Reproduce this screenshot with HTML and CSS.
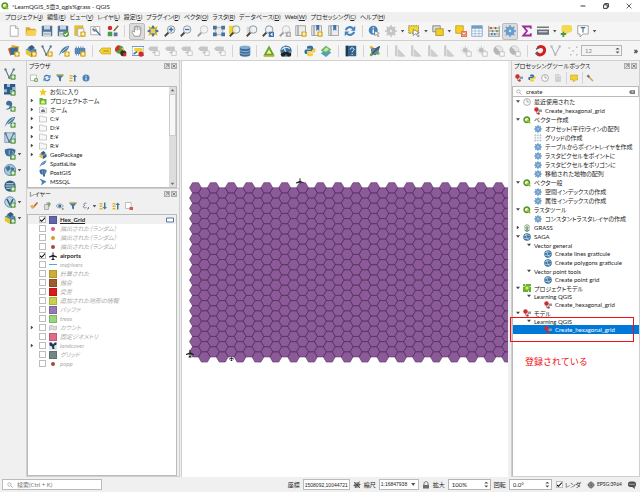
FILE: index.html
```html
<!DOCTYPE html>
<html lang="ja">
<head>
    <meta charset="UTF-8">
    <meta name="viewport" content="width=device-width, initial-scale=1.0">
    <title>*LearnQGIS_5章3_qgis%grass - QGIS</title>
    <link rel="stylesheet" href="styles.css">
</head>
<body>
    <!-- Icon set -->
    <svg class="sprite" aria-hidden="true">
        <symbol id="plus" viewBox="0 0 16 16"><rect x="8.5" y="8.5" width="7" height="7" rx="1" fill="#5d9a4c"/><path d="M12 9.8v4.4M9.8 12h4.4" stroke="#fff" stroke-width="1.6"/></symbol>
        <symbol id="plusy" viewBox="0 0 16 16"><rect x="8.5" y="8.5" width="7" height="7" rx="1" fill="#d9ab16"/><path d="M12 9.8v4.4M9.8 12h4.4" stroke="#fff" stroke-width="1.6"/></symbol>
        <symbol id="qgis" viewBox="0 0 16 16"><circle cx="7.5" cy="7.5" r="5.3" fill="none" stroke="#5a9a28" stroke-width="3.4"/><path d="M8 8l6.5 6.5" stroke="#8cc63f" stroke-width="3.2"/><path d="M7 7h3.5l-3.5 3.5z" fill="#e9d52f"/></symbol>
        <symbol id="new" viewBox="0 0 16 16"><path d="M3 1h7l3.5 3.5V15H3z" fill="#fff" stroke="#9a9a9a"/><path d="M10 1v3.5h3.5" fill="none" stroke="#9a9a9a"/></symbol>
        <symbol id="open" viewBox="0 0 16 16"><path d="M1 3h5l1.500 2H14v9H1z" fill="#d9a92a"/><path d="M3 7h13l-2 7H1z" fill="#f7d258"/></symbol>
        <symbol id="save" viewBox="0 0 16 16"><rect x="1" y="1" width="14" height="14" rx="1" fill="#4f7396"/><path d="M4 1h8v5H4z" fill="#c9d5e0"/><path d="M3 9h10v6H3z" fill="#e8edf1"/><path d="M4 11h8M4 13h8" stroke="#8b9aa8"/></symbol>
        <symbol id="saveas" viewBox="0 0 16 16"><use href="#save"/><circle cx="12" cy="12" r="4" fill="#5d9a4c"/><path d="M10 12l1.500 1.500 2.500-3" fill="none" stroke="#fff" stroke-width="1.400"/></symbol>
        <symbol id="layout" viewBox="0 0 16 16"><path d="M1 1h11v3H4v10H1z" fill="#f0c62c" stroke="#b8911a" stroke-width=".6"/><path d="M5 5h8v10H5z" fill="#fff" stroke="#999"/><use href="#plusy"/></symbol>
        <symbol id="layouts" viewBox="0 0 16 16"><path d="M1 2h12v11H1z" fill="#fff" stroke="#999"/><path d="M4 5l3 3M7 6l7 8" stroke="#56789a" stroke-width="2"/><circle cx="6" cy="6" r="2.500" fill="none" stroke="#888"/></symbol>
        <symbol id="style" viewBox="0 0 16 16"><circle cx="4" cy="4" r="3" fill="#c53030"/><path d="M1 9h6v6H1z" fill="#4d9a4d"/><path d="M15 1L9 8" stroke="#8a6a3c" stroke-width="2"/><path d="M9 10h5v5H9z" fill="#56789a"/></symbol>
        <symbol id="hand" viewBox="0 0 16 16"><path d="M4.500 15C3 12 1 10 1.500 8.500S4 9 4.500 9.500V3c0-1.500 2-1.500 2 0 0-2.500 2.200-2.500 2.200 0 .3-2 2.200-1.500 2.200.3 0-1.300 2.100-1.300 2.100.5V10l-1.500 5z" fill="#fff" stroke="#777"/><path d="M6.500 3v4M8.700 3v4M10.900 4v3" stroke="#777" stroke-width=".8"/></symbol>
        <symbol id="panto" viewBox="0 0 16 16"><path d="M8 0l3.500 5h-7zM8 16l3.500-5h-7zM0 8l5-3.500v7zM16 8l-5-3.500v7z" fill="#44709b"/><path d="M2 2l5 1-4 4zM14 2l-5 1 4 4zM2 14l5-1-4-4zM14 14l-5-1 4-4z" fill="#e8b91e"/><circle cx="8" cy="8" r="3" fill="#f2cd3a"/></symbol>
        <symbol id="lens" viewBox="0 0 16 16"><path d="M6 10l-5 5" stroke="#4a4438" stroke-width="2.400"/><circle cx="9.500" cy="6" r="5" fill="#eef2f5" fill-opacity=".8" stroke="#8d979f" stroke-width="1.300"/></symbol>
        <symbol id="zoomin" viewBox="0 0 16 16"><use href="#lens"/><path d="M9.500 3v6M6.500 6h6" stroke="#3c73ad" stroke-width="1.800"/></symbol>
        <symbol id="zoomout" viewBox="0 0 16 16"><use href="#lens"/><path d="M6.500 6h6" stroke="#3c73ad" stroke-width="1.800"/></symbol>
        <symbol id="zoomfull" viewBox="0 0 16 16"><path d="M3 3h10v10H3z" fill="#e6eaee" stroke="#999"/><path d="M0 1h5v5H0zM11 1h5v5h-5zM0 10h5v5H0zM11 10h5v5h-5z" fill="#46749f"/></symbol>
        <symbol id="zoomsel" viewBox="0 0 16 16"><path d="M0 1h9v11H0z" fill="#f4d522"/><use href="#lens"/></symbol>
        <symbol id="zoomlayer" viewBox="0 0 16 16"><path d="M1 2h8v9H1z" fill="#d8d8d8"/><use href="#lens"/></symbol>
        <symbol id="zoomlast" viewBox="0 0 16 16"><use href="#lens"/><path d="M9 9h7v7H9z" fill="#3c73ad"/><path d="M14 10l-3 2.500 3 2.500" fill="#fff"/></symbol>
        <symbol id="map" viewBox="0 0 16 16"><path d="M1 1h13v13H1z" fill="#ececec" stroke="#8b9196"/><path d="M4 1v13" stroke="#8b9196" stroke-width="1.500"/></symbol>
        <symbol id="mapnew" viewBox="0 0 16 16"><use href="#map"/><use href="#plusy"/></symbol>
        <symbol id="marknew" viewBox="0 0 16 16"><use href="#map"/><path d="M7 0h4v8L9 6 7 8z" fill="#3c73ad"/><use href="#plusy"/></symbol>
        <symbol id="mark" viewBox="0 0 16 16"><use href="#map"/><path d="M7 0h4v8L9 6 7 8z" fill="#3c73ad"/></symbol>
        <symbol id="refresh" viewBox="0 0 16 16"><path d="M2.500 7A5.500 5 0 0 1 12 4.500M13.500 9A5.500 5 0 0 1 4 11.500" fill="none" stroke="#4181bd" stroke-width="2.800"/><path d="M15 1v6.500H9zM1 15V8.500h6z" fill="#4181bd"/></symbol>
        <symbol id="identify" viewBox="0 0 16 16"><circle cx="7" cy="7" r="6" fill="#4a83b8"/><path d="M7 3v1.500M7 6v5" stroke="#fff" stroke-width="1.800"/><path d="M9 8l6 3-2.500 1 2 3-1.500.5-1.500-3L9 14z" fill="#fff" stroke="#555" stroke-width=".7"/></symbol>
        <symbol id="gear" viewBox="0 0 16 16"><circle cx="8" cy="8" r="4.300" fill="none" stroke="#6a9ccc" stroke-width="3.400"/><path d="M8 0v16M0 8h16M2.300 2.300l11.400 11.400M13.700 2.300L2.300 13.700" stroke="#6a9ccc" stroke-width="2"/><circle cx="8" cy="8" r="1.600" fill="#d5e5f3"/></symbol>
        <symbol id="select" viewBox="0 0 16 16"><path d="M1 1h13v10H1z" fill="#f6d92a" stroke="#666" stroke-dasharray="2 1"/><path d="M7 6l8 4-3 1 3 4-2 .5-2.500-4L7 14z" fill="#fff" stroke="#555" stroke-width=".8"/></symbol>
        <symbol id="copy" viewBox="0 0 16 16"><path d="M1 1h10v8H1z" fill="#d8d8d8" stroke="#777"/><path d="M5 5h10v9H5z" fill="#f1ce25" stroke="#a98b1b"/></symbol>
        <symbol id="deselect" viewBox="0 0 16 16"><path d="M1 1h10v10H1z" fill="#f6cf22" stroke="#b8961c"/><path d="M8 8h8v8H8z" fill="#e4774f"/><path d="M10 10l4 4M14 10l-4 4" stroke="#fff" stroke-width="1.400"/></symbol>
        <symbol id="table" viewBox="0 0 16 16"><path d="M1 1h14v14H1z" fill="#fff" stroke="#6f94b8"/><path d="M1 1h14v4H1z" fill="#6f9bc8"/><path d="M1 8h14M1 11.500h14M5.500 3v12M10.500 3v12" stroke="#93b3d0"/></symbol>
        <symbol id="abacus" viewBox="0 0 16 16"><path d="M1 1v14M15 1v14M1 4h14M1 8h14M1 12h14M0 15h16" stroke="#7c7c7c"/><path d="M3 2.500h2v3H3zM9 2.500h2v3H9z" fill="#c84335"/><path d="M5 6.500h2v3H5zM11 6.500h2v3h-2z" fill="#5c9a4c"/><path d="M4 10.500h2v3H4zM8 10.500h2v3H8z" fill="#4a83b8"/></symbol>
        <symbol id="sigma" viewBox="0 0 16 16"><path d="M13 5V2H3l5 6-5 6h10v-3" fill="none" stroke="#962a96" stroke-width="2.400"/></symbol>
        <symbol id="measure" viewBox="0 0 16 16"><path d="M0 2h16v2H0z" fill="#777"/><path d="M0 6h16v7H0z" fill="#64727f"/><path d="M2 9h12" stroke="#dce2e7" stroke-width="1.500"/></symbol>
        <symbol id="tip" viewBox="0 0 16 16"><rect x="2" y="0" width="14" height="10" rx="3" fill="#f1da50"/><path d="M7 9h5l-5 5z" fill="#f1da50"/><path d="M1 12h7M4.500 9v7" stroke="#529447" stroke-width="2.400"/></symbol>
        <symbol id="text" viewBox="0 0 16 16"><path d="M1 1h14v11H8l-4 4v-4H1z" fill="#fff" stroke="#888"/><path d="M5 3.500h6M8 3.500V10" stroke="#456a91" stroke-width="1.500"/></symbol>
        <symbol id="sources" viewBox="0 0 16 16"><path d="M0 5l9-4 3 9-9 4z" fill="#c5502c"/><path d="M5 0l10 2-2 10-9-2z" fill="#e0aa25"/><path d="M3 4l10-1v10H4z" fill="#376b9e"/><use href="#plusy"/></symbol>
        <symbol id="box" viewBox="0 0 16 16"><path d="M1 6l7-4 7 4-7 4z" fill="#5788b2"/><path d="M1 6l7 4v6l-7-4z" fill="#eac42d"/><path d="M15 6l-7 4v6l7-4z" fill="#35648d"/><path d="M4 3l5-3 4 3-5 4z" fill="#395c7a"/></symbol>
        <symbol id="geopkg" viewBox="0 0 16 16"><use href="#box"/><use href="#plusy"/></symbol>
        <symbol id="geopkgadd" viewBox="0 0 16 16"><use href="#box"/><use href="#plus"/></symbol>
        <symbol id="vee" viewBox="0 0 16 16"><path d="M2 2l5 11L13 2" fill="none" stroke="#56748d" stroke-width="1.400"/><circle cx="2" cy="2" r="1.600" fill="#667f93"/><circle cx="13" cy="2" r="1.600" fill="#667f93"/><circle cx="7" cy="13" r="1.600" fill="#667f93"/></symbol>
        <symbol id="shape" viewBox="0 0 16 16"><use href="#vee"/><use href="#plusy"/></symbol>
        <symbol id="vector" viewBox="0 0 16 16"><use href="#vee"/><use href="#plus"/></symbol>
        <symbol id="feather" viewBox="0 0 16 16"><path d="M1 15C3 7 7 2 15 1c-1 6-6 9-11 10z" fill="#4a7ca9"/><path d="M1 15C4 10 8 6 13 3" fill="none" stroke="#dce8f2"/></symbol>
        <symbol id="spatial" viewBox="0 0 16 16"><use href="#feather"/><use href="#plusy"/></symbol>
        <symbol id="spatialadd" viewBox="0 0 16 16"><use href="#feather"/><use href="#plus"/></symbol>
        <symbol id="memory" viewBox="0 0 16 16"><rect x="1" y="4" width="14" height="8" rx="1" fill="#4d7fae"/><path d="M3 2v12M6 2v12M9 2v12M12 2v12" stroke="#6392bb" stroke-width="1.400"/><use href="#plusy"/></symbol>
        <symbol id="label" viewBox="0 0 16 16"><path d="M0 8l4-4h12v8H4z" fill="#f4d02e" stroke="#b99718" stroke-width=".8"/><path d="M6 8h7" stroke="#b09434" stroke-width="1.500"/></symbol>
        <symbol id="diagram" viewBox="0 0 16 16"><circle cx="6" cy="6" r="5.500" fill="#52a047"/><path d="M6 6V.5A5.500 5.500 0 0 0 1 9z" fill="#d52f25"/><circle cx="11" cy="11" r="4" fill="#303030"/><path d="M11 11l4-1v5h-4z" fill="#d52f25"/><path d="M8 4h4v4z" fill="#edc528"/></symbol>
        <symbol id="labels" viewBox="0 0 16 16"><path d="M0 2h16v12H0z" fill="#fff" stroke="#4a7eae"/><path d="M3 4h11v5H5L3 7z" fill="#eed031"/><path d="M2 12l5-3" stroke="#56789a" stroke-width="2"/><circle cx="12" cy="12" r="3.500" fill="#d02a2a"/></symbol>
        <symbol id="labeloff" viewBox="0 0 16 16"><path d="M0 5l3-3h10v6H3z" fill="#999"/><path d="M9 8h6v6H9z" fill="#fff" stroke="#888"/><path d="M6 10h4" stroke="#888" stroke-width="2"/></symbol>
        <symbol id="db" viewBox="0 0 16 16"><path d="M1 3v10c0 3.500 14 3.500 14 0V3z" fill="#3b6c9b"/><ellipse cx="8" cy="3" rx="7" ry="2.500" fill="#85abd0"/><path d="M1 6.500c0 3 14 3 14 0M1 10c0 3 14 3 14 0" fill="none" stroke="#adc8df"/></symbol>
        <symbol id="grass" viewBox="0 0 16 16"><path d="M8 3l5.500 10h-11z" fill="#f7ef9a" stroke="#60a62e" stroke-width="2.400"/><path d="M1 15h14" stroke="#d4ab20" stroke-width="1.500"/></symbol>
        <symbol id="globe" viewBox="0 0 16 16"><circle cx="8" cy="8" r="7.500" fill="#34709f"/><path d="M2 6q6-5 11-1M2 10q6 4 12-1M5 2q2 8 6 12" fill="none" stroke="#d5e5f1" stroke-width="1.500"/></symbol>
        <symbol id="osm" viewBox="0 0 16 16"><use href="#globe"/><circle cx="4" cy="12.500" r="3" fill="#222"/><circle cx="12" cy="12.500" r="3" fill="#222"/><path d="M5 9h6v4H5z" fill="#222"/></symbol>
        <symbol id="python" viewBox="0 0 16 16"><path d="M8 1c-4 0-4 1-4 3v1h5v1H2C0 7 0 11 2 12h2V9l1-1h5l2-2V3c0-2-2-2-4-2z" fill="#35709f"/><path d="M8 15c4 0 4-1 4-3v-1H7v-1h7c2-1 2-5 0-6h-2v3l-1 1H6l-2 2v3c0 2 2 2 4 2z" fill="#f4cd3b"/></symbol>
        <symbol id="stack" viewBox="0 0 16 16"><path d="M1 11l8-5 6 4-7 6z" fill="#4b9fc6"/><path d="M1 7l7-6 7 5-7 6z" fill="#64b35d"/><path d="M4 7l5-4 3 3-4 3z" fill="#c9e3ab"/></symbol>
        <symbol id="help" viewBox="0 0 16 16"><path d="M1 1h14v14H1z" fill="#33608d"/><path d="M1 1h3v14H1z" fill="#20364b"/><path d="M7 6c0-3 5-3 5 0 0 2-2.500 1.500-2.500 4M9.500 12v1.500" fill="none" stroke="#fff" stroke-width="1.200"/></symbol>
        <symbol id="topo" viewBox="0 0 16 16"><path d="M3 3l5 2 6-3-2 7-3 4-5-1z" fill="#5f8ead" stroke="#36546b"/><path d="M2 14l12-12" stroke="#3d4c55" stroke-width="1.500"/><circle cx="3" cy="3" r="2" fill="#e5b82d"/><circle cx="12" cy="11" r="2" fill="#6ba843"/><circle cx="3" cy="13" r="2" fill="#6ba843"/></symbol>
        <symbol id="bars" viewBox="0 0 16 16"><path d="M2 15V1h2v14M6 15V6l8 8v1z" fill="#aaa" stroke="#999"/></symbol>
        <symbol id="sun" viewBox="0 0 16 16"><circle cx="7" cy="7" r="3" fill="#888"/><path d="M7 1v12M1 7h12M3 3l8 8M11 3l-8 8" stroke="#888"/><path d="M9 9h6v6H9z" fill="#fff" stroke="#777"/></symbol>
        <symbol id="contrast" viewBox="0 0 16 16"><circle cx="7" cy="7" r="6" fill="#ddd" stroke="#888"/><path d="M3 2l8 9A6 6 0 0 1 3 2z" fill="#777"/><path d="M9 9h6v6H9z" fill="#fff" stroke="#777"/></symbol>
        <symbol id="magnet" viewBox="0 0 16 16"><path d="M5 4c4-4 10-1 9 4s-7 7-10 3" fill="none" stroke="#d31f1f" stroke-width="4"/><path d="M3 6l3-3M2 12l3-3" stroke="#555" stroke-width="2"/></symbol>
        <symbol id="dots" viewBox="0 0 16 16"><path d="M2 3h2v2H2zM7 7h2v2H7zM12 2h2v2h-2zM4 12h2v2H4zM12 12h2v2h-2z" fill="#888"/></symbol>
        <symbol id="raster" viewBox="0 0 16 16"><path d="M0 0h15v14H0z" fill="#2f5a85"/><path d="M4 0h4v4H4zM11 4h4v4h-4zM0 7h4v4H0zM8 8h4v4H8z" fill="#9abbd9"/><use href="#plus"/></symbol>
        <symbol id="comma" viewBox="0 0 16 16"><path d="M3 12c4-1 5-3 4-5-3 1-5-1-4-4 1-3 8-3 8 2 0 4-3 8-8 8z" fill="#3d6f9d"/><use href="#plus"/></symbol>
        <symbol id="virtual" viewBox="0 0 16 16"><path d="M1 1h14v13H1z" fill="#bdd3e5" stroke="#6b93b5"/><use href="#vector"/></symbol>
        <symbol id="elephant" viewBox="0 0 16 16"><path d="M1 2c3-2 11-2 14 0 1 3-1 7-3 8v5H8V11C3 12 1 8 1 2z" fill="#3c6f9f"/><path d="M7 3v6M11 4q3 2 0 5" fill="none" stroke="#b9d0e3"/></symbol>
        <symbol id="pgadd" viewBox="0 0 16 16"><use href="#elephant"/><use href="#plus"/></symbol>
        <symbol id="wms" viewBox="0 0 16 16"><circle cx="8" cy="8" r="7.500" fill="#a9c6de" stroke="#4e7ba3"/><path d="M2 5l5-3 2 4-4 4zM10 4l4 2-2 4-3-2z" fill="#3f719c"/><use href="#plus"/></symbol>
        <symbol id="wcs" viewBox="0 0 16 16"><circle cx="8" cy="8" r="7.500" fill="#2f5c86"/><path d="M3 5h10M2 8h12M3 11h10" stroke="#d2e1ed" stroke-width="1.400"/><use href="#plus"/></symbol>
        <symbol id="wfs" viewBox="0 0 16 16"><circle cx="8" cy="8" r="7" fill="#bcd3e5" stroke="#4e7ba3"/><path d="M4 4l4 8 4-8" fill="none" stroke="#31597e" stroke-width="2"/><use href="#plus"/></symbol>
        <symbol id="addlayer" viewBox="0 0 16 16"><path d="M1 2h12v11H1z" fill="#fff" stroke="#888"/><use href="#plus"/></symbol>
        <symbol id="funnel" viewBox="0 0 16 16"><path d="M1 1h14v2L10 8v7l-4-2V8L1 3z" fill="#47799f"/><path d="M1 1h14v2H1z" fill="#e0bd3a"/></symbol>
        <symbol id="collapse" viewBox="0 0 16 16"><path d="M1 2h6v3H1zM1 7h6v3H1zM1 12h6v3H1z" fill="#e3b731"/><path d="M10 15V6H7l4.500-5L16 6h-3v9z" fill="#47799f"/></symbol>
        <symbol id="expand" viewBox="0 0 16 16"><path d="M1 2h6v3H1zM1 7h6v3H1zM1 12h6v3H1z" fill="#e3b731"/><path d="M10 1v9H7l4.500 5L16 10h-3V1z" fill="#47799f"/></symbol>
        <symbol id="info" viewBox="0 0 16 16"><circle cx="8" cy="8" r="7" fill="#4a83b8"/><path d="M8 3.500v2M8 7v5.500" stroke="#fff" stroke-width="2"/></symbol>
        <symbol id="star" viewBox="0 0 16 16"><path d="M8 0l2.300 5.500 5.700.5-4.300 3.800L13 16l-5-3.300L3 16l1.300-6.200L0 6l5.700-.5z" fill="#f3cb28"/></symbol>
        <symbol id="phome" viewBox="0 0 16 16"><path d="M1 2h6l1 2h7v11H1z" fill="#5fb336"/><path d="M4 9l4-3 4 3v4H4z" fill="#f6e57a"/></symbol>
        <symbol id="folder" viewBox="0 0 16 16"><path d="M1 2h6l1 2h7v10H1z" fill="#f8f8f8" stroke="#9a9a9a"/></symbol>
        <symbol id="home" viewBox="0 0 16 16"><use href="#folder"/><path d="M4 9l4-3 4 3v3H4z" fill="#777"/></symbol>
        <symbol id="mssql" viewBox="0 0 16 16"><path d="M1 1l14 6-11 8 2-7z" fill="#4a7fae"/></symbol>
        <symbol id="brush" viewBox="0 0 16 16"><path d="M15 1L8 9" stroke="#c5503b" stroke-width="3"/><path d="M0 7l6-1 4 5-6 3z" fill="#e6b235"/></symbol>
        <symbol id="group" viewBox="0 0 16 16"><path d="M3 5h8v10H3zM6 2h7v8" fill="#ddd" stroke="#777"/><path d="M12 0v8M8 4h8" stroke="#6ba05e" stroke-width="2"/></symbol>
        <symbol id="eye" viewBox="0 0 16 16"><path d="M0 8q7-9 15 0-8 8-15 0z" fill="#d8e1e8" stroke="#65747f"/><circle cx="7.500" cy="8" r="3" fill="#3c6f9f"/><path d="M11 13h5l-2.500 3z" fill="#444"/></symbol>
        <symbol id="epsilon" viewBox="0 0 16 16"><path d="M9 3C5 0 1 5 6 7 0 8 3 14 9 11" fill="none" stroke="#8b6a9e" stroke-width="1.800"/><path d="M10 14h2M13 10v4" stroke="#666" stroke-width="1.500"/></symbol>
        <symbol id="remove" viewBox="0 0 16 16"><path d="M1 1h11v12H1z" fill="#fff" stroke="#888"/><path d="M9 10h7v6H9z" fill="#d9564b"/></symbol>
        <symbol id="model" viewBox="0 0 16 16"><circle cx="5" cy="5" r="4.500" fill="#d52a2a"/><path d="M9 5h7v5H9z" fill="#8a9db0"/><circle cx="9" cy="13" r="2.500" fill="#b93a3a"/><path d="M5 8v5h3" fill="none" stroke="#8a4444"/></symbol>
        <symbol id="clock" viewBox="0 0 16 16"><circle cx="8" cy="8" r="6.800" fill="#fafafa" stroke="#888" stroke-width="1.300"/><path d="M8 3v5h4" fill="none" stroke="#888" stroke-width="1.300"/></symbol>
        <symbol id="results" viewBox="0 0 16 16"><path d="M3 1h7l3 3v11H3z" fill="#ccc" stroke="#888"/><path d="M5 7h6M5 10h6M5 13h6" stroke="#777"/></symbol>
        <symbol id="inplace" viewBox="0 0 16 16"><path d="M1 2h14v10h-4l-4 4v-4H1z" fill="#f3d034" stroke="#bc9920"/></symbol>
        <symbol id="wrench" viewBox="0 0 16 16"><path d="M4 4l10 10" stroke="#c9a84c" stroke-width="3"/><path d="M1 4l4-3 3 4-3 3z" fill="#777"/></symbol>
        <symbol id="search" viewBox="0 0 16 16"><circle cx="6.500" cy="6.500" r="4.500" fill="none" stroke="#888" stroke-width="1.500"/><path d="M10 10l5 5" stroke="#888" stroke-width="1.800"/></symbol>
        <symbol id="clear" viewBox="0 0 16 16"><path d="M0 8l4-5h12v10H4z" fill="#777"/><path d="M7 5.500l5 5M12 5.500l-5 5" stroke="#fff" stroke-width="1.500"/></symbol>
        <symbol id="grid" viewBox="0 0 16 16"><path d="M3 0v16M8 0v16M13 0v16M0 3h16M0 8h16M0 13h16" stroke="#8a9cac" stroke-dasharray="2 1"/></symbol>
        <symbol id="tree" viewBox="0 0 16 16"><circle cx="8" cy="6" r="5" fill="#c9d8c3" stroke="#839b7a"/><path d="M8 5v9M3 12l5 3 5-3" fill="none" stroke="#54823f" stroke-width="2"/></symbol>
        <symbol id="pmodel" viewBox="0 0 16 16"><path d="M0 0h16v16H0z" fill="#5fb336"/><path d="M0 5h3M13 5h3M5 0v3M11 13v3" stroke="#dff0d2" stroke-width="2"/><path d="M5 5h6v6H5z" fill="#f4e03c"/></symbol>
        <symbol id="plane" viewBox="0 0 16 16"><path d="M7 1q1-1.500 2 0v5l7 3v2L9 9.500V13l2 1.500V16H5v-1.500L7 13V9.500L0 11V9l7-3z" fill="#1c1c1c"/></symbol>
        <symbol id="lock" viewBox="0 0 16 16"><path d="M2 8h12v7H2z" fill="#6d6d6d"/><path d="M4 8V5c0-5 8-5 8 0v3" fill="none" stroke="#6d6d6d" stroke-width="2"/></symbol>
        <symbol id="extent" viewBox="0 0 16 16"><circle cx="8" cy="8" r="6" fill="#999"/><path d="M2 2l12 12M13 1L4 14M1 9l14-2" stroke="#444" stroke-width="1.600"/></symbol>
        <symbol id="crs" viewBox="0 0 16 16"><circle cx="8" cy="8" r="6" fill="#777"/><path d="M0 8h16M8 0v16" stroke="#555" stroke-width="1.200"/><circle cx="8" cy="8" r="3" fill="none" stroke="#aaa"/></symbol>
        <symbol id="bubble" viewBox="0 0 16 16"><rect x="0" y="1" width="16" height="11" rx="5" fill="#4e4e4e"/><path d="M7 11h6l1 5z" fill="#4e4e4e"/><path d="M3 6.500h2M7 6.500h2M11 6.500h2" stroke="#fff" stroke-width="2"/></symbol>
        <symbol id="chip" viewBox="0 0 16 16"><path d="M1 4h14v8H1z" fill="#fff" stroke="#5872a0" stroke-width="2"/></symbol>
        <symbol id="float" viewBox="0 0 16 16"><path d="M1 1h14v14H1z" fill="#ddd" stroke="#777" stroke-width="1.500"/><path d="M4 12l7-7M6 4h6v6" fill="none" stroke="#666" stroke-width="1.500"/></symbol>
        <symbol id="close" viewBox="0 0 16 16"><path d="M1 1h14v14H1z" fill="#ddd" stroke="#777" stroke-width="1.500"/><path d="M4 4l8 8M12 4l-8 8" stroke="#555" stroke-width="1.800"/></symbol>
        <symbol id="count" viewBox="0 0 16 16"><path d="M1 4q3-3 7 0t7 0v7q-4 3-7 0t-7 2z" fill="#ddd" stroke="#999"/></symbol>
        <symbol id="cover" viewBox="0 0 16 16"><path d="M0 0h16v16H0z" fill="#dbe6ef"/><path d="M1 1h4l3 4 4-4h3v4l-5 3 1 6H7l-1-5-5-2z" fill="#22364f"/></symbol>
    </svg>

    <header class="title-bar">
        <svg class="icon"><use href="#qgis"/></svg>
        <span class="title-text">*LearnQGIS_5章3_qgis%grass - QGIS</span>
        <div class="window-buttons">
            <button aria-label="最小化"><svg viewBox="0 0 10 10"><path d="M1 5h8" stroke="#222" stroke-width="1.500"/></svg></button>
            <button aria-label="元に戻す"><svg viewBox="0 0 10 10"><path d="M1 3h6v6H1zM3 3V1h6v6H7" fill="none" stroke="#222" stroke-width="1.500"/></svg></button>
            <button aria-label="閉じる"><svg viewBox="0 0 10 10"><path d="M1 1l8 8M9 1L1 9" stroke="#222" stroke-width="1.200"/></svg></button>
        </div>
    </header>

    <nav class="menu-bar">
        <a href="#">プロジェクト(<u>J</u>)</a>
        <a href="#">編集(<u>E</u>)</a>
        <a href="#">ビュー(<u>V</u>)</a>
        <a href="#">レイヤ(<u>L</u>)</a>
        <a href="#">設定(<u>S</u>)</a>
        <a href="#">プラグイン(<u>P</u>)</a>
        <a href="#">ベクタ(<u>O</u>)</a>
        <a href="#">ラスタ(<u>R</u>)</a>
        <a href="#">データベース(<u>D</u>)</a>
        <a href="#">Web(<u>W</u>)</a>
        <a href="#">プロセッシング(<u>C</u>)</a>
        <a href="#">ヘルプ(<u>H</u>)</a>
    </nav>

    <div class="toolbar toolbar-main">
        <button aria-label="新規"><svg><use href="#new"/></svg></button>
        <button aria-label="開く"><svg><use href="#open"/></svg></button>
        <button aria-label="保存"><svg><use href="#save"/></svg></button>
        <button aria-label="名前を付けて保存"><svg><use href="#saveas"/></svg></button>
        <button aria-label="新規レイアウト"><svg><use href="#layout"/></svg></button>
        <button aria-label="レイアウトマネージャ"><svg><use href="#layouts"/></svg></button>
        <button aria-label="スタイル"><svg><use href="#style"/></svg></button>
        <span class="sep"></span>
        <button class="active" aria-label="移動"><svg><use href="#hand"/></svg></button>
        <button aria-label="選択部分に移動"><svg><use href="#panto"/></svg></button>
        <button aria-label="拡大"><svg><use href="#zoomin"/></svg></button>
        <button aria-label="縮小"><svg><use href="#zoomout"/></svg></button>
        <button disabled aria-label="等倍"><svg><use href="#lens"/></svg></button>
        <button aria-label="全域表示"><svg><use href="#zoomfull"/></svg></button>
        <button aria-label="選択部分にズーム"><svg><use href="#zoomsel"/></svg></button>
        <button aria-label="レイヤにズーム"><svg><use href="#zoomlayer"/></svg></button>
        <button aria-label="前の表示"><svg><use href="#zoomlast"/></svg></button>
        <button disabled aria-label="次の表示"><svg><use href="#zoomlast"/></svg></button>
        <button aria-label="新規マップ"><svg><use href="#mapnew"/></svg></button>
        <button aria-label="新規ブックマーク"><svg><use href="#marknew"/></svg></button>
        <button aria-label="ブックマーク"><svg><use href="#mark"/></svg></button>
        <button aria-label="再読み込み"><svg><use href="#refresh"/></svg></button>
        <span class="sep"></span>
        <button aria-label="地物情報"><svg><use href="#identify"/></svg></button>
        <button disabled aria-label="アクション"><svg><use href="#gear"/></svg></button>
        <i class="caret"></i>
        <button aria-label="地物選択"><svg><use href="#select"/></svg></button>
        <i class="caret"></i>
        <button aria-label="値で選択"><svg><use href="#copy"/></svg></button>
        <i class="caret"></i>
        <button aria-label="選択解除"><svg><use href="#deselect"/></svg></button>
        <button aria-label="属性テーブル"><svg><use href="#table"/></svg></button>
        <button aria-label="フィールド計算機"><svg><use href="#abacus"/></svg></button>
        <button class="active" aria-label="ツールボックス"><svg><use href="#gear"/></svg></button>
        <button aria-label="統計"><svg><use href="#sigma"/></svg></button>
        <button aria-label="計測"><svg><use href="#measure"/></svg></button>
        <i class="caret"></i>
        <button aria-label="マップチップ"><svg><use href="#tip"/></svg></button>
        <button aria-label="注記"><svg><use href="#text"/></svg></button>
        <i class="caret"></i>
    </div>

    <div class="toolbar toolbar-data">
        <button aria-label="データソース"><svg><use href="#sources"/></svg></button>
        <button aria-label="新規GeoPackage"><svg><use href="#geopkg"/></svg></button>
        <button aria-label="新規シェープファイル"><svg><use href="#shape"/></svg></button>
        <button aria-label="新規SpatiaLite"><svg><use href="#spatial"/></svg></button>
        <button aria-label="新規一時レイヤ"><svg><use href="#memory"/></svg></button>
        <span class="sep"></span>
        <button aria-label="ラベル"><svg><use href="#label"/></svg></button>
        <button aria-label="ダイアグラム"><svg><use href="#diagram"/></svg></button>
        <button aria-label="ラベル固定"><svg><use href="#labels"/></svg></button>
        <button disabled aria-label="ラベル1"><svg><use href="#labeloff"/></svg></button>
        <button disabled aria-label="ラベル2"><svg><use href="#labeloff"/></svg></button>
        <button disabled aria-label="ラベル3"><svg><use href="#labeloff"/></svg></button>
        <button disabled aria-label="ラベル4"><svg><use href="#labeloff"/></svg></button>
        <button disabled aria-label="ラベル5"><svg><use href="#labeloff"/></svg></button>
        <span class="sep"></span>
        <button aria-label="DBマネージャ"><svg><use href="#db"/></svg></button>
        <span class="sep"></span>
        <button aria-label="GRASS"><svg><use href="#grass"/></svg></button>
        <button aria-label="MetaSearch"><svg><use href="#osm"/></svg></button>
        <span class="sep"></span>
        <button aria-label="Python"><svg><use href="#python"/></svg></button>
        <button aria-label="プラグイン"><svg><use href="#stack"/></svg></button>
        <span class="sep"></span>
        <button aria-label="ヘルプ"><svg><use href="#help"/></svg></button>
        <span class="sep"></span>
        <button aria-label="トポロジ"><svg><use href="#topo"/></svg></button>
        <span class="sep"></span>
        <button disabled aria-label="ヒストグラム1"><svg><use href="#bars"/></svg></button>
        <button disabled aria-label="ヒストグラム2"><svg><use href="#bars"/></svg></button>
        <button disabled aria-label="ヒストグラム3"><svg><use href="#bars"/></svg></button>
        <button disabled aria-label="ヒストグラム4"><svg><use href="#bars"/></svg></button>
        <button disabled aria-label="明るく"><svg><use href="#sun"/></svg></button>
        <button disabled aria-label="暗く"><svg><use href="#sun"/></svg></button>
        <button disabled aria-label="コントラスト増"><svg><use href="#contrast"/></svg></button>
        <button disabled aria-label="コントラスト減"><svg><use href="#contrast"/></svg></button>
        <span class="sep"></span>
        <button aria-label="スナップ"><svg><use href="#magnet"/></svg></button>
        <button disabled aria-label="頂点"><svg><use href="#vee"/></svg></button>
        <button disabled aria-label="交点"><svg><use href="#dots"/></svg></button>
        <span class="spin snap"><input type="text" value="12" disabled aria-label="許容範囲"><i class="steps"></i></span>
        <span class="more">»</span>
    </div>

    <main class="workspace">
        <div class="side-bar">
            <div><button aria-label="ベクタ追加"><svg><use href="#vector"/></svg></button></div>
            <div><button aria-label="ラスタ追加"><svg><use href="#raster"/></svg></button></div>
            <div><button aria-label="CSV追加"><svg><use href="#comma"/></svg></button></div>
            <div><button aria-label="SpatiaLite追加"><svg><use href="#spatialadd"/></svg></button></div>
            <div><button aria-label="仮想レイヤ追加"><svg><use href="#virtual"/></svg></button></div>
            <div><button aria-label="PostGIS追加"><svg><use href="#pgadd"/></svg></button><i class="caret"></i></div>
            <div><button aria-label="WMS追加"><svg><use href="#wms"/></svg></button><i class="caret"></i></div>
            <div><button aria-label="WCS追加"><svg><use href="#wcs"/></svg></button></div>
            <div><button aria-label="WFS追加"><svg><use href="#wfs"/></svg></button><i class="caret"></i></div>
            <div><button aria-label="GeoPackage追加"><svg><use href="#geopkgadd"/></svg></button><i class="caret"></i></div>
        </div>

        <div class="left-docks">
            <section class="dock">
                <div class="dock-title">ブラウザ<span><svg><use href="#float"/></svg><svg><use href="#close"/></svg></span></div>
                <div class="dock-tools">
                    <button aria-label="追加"><svg><use href="#addlayer"/></svg></button>
                    <button aria-label="更新"><svg><use href="#refresh"/></svg></button>
                    <button aria-label="フィルタ"><svg><use href="#funnel"/></svg></button>
                    <button aria-label="折りたたむ"><svg><use href="#collapse"/></svg></button>
                    <button aria-label="プロパティ"><svg><use href="#info"/></svg></button>
                </div>
                <div class="browser-box">
                    <ul class="tree browser-tree">
                        <li><svg><use href="#star"/></svg>お気に入り</li>
                        <li class="closed"><svg><use href="#phome"/></svg>プロジェクトホーム</li>
                        <li class="closed"><svg><use href="#home"/></svg>ホーム</li>
                        <li class="closed"><svg><use href="#folder"/></svg>C:¥</li>
                        <li class="closed"><svg><use href="#folder"/></svg>D:¥</li>
                        <li class="closed"><svg><use href="#folder"/></svg>E:¥</li>
                        <li class="closed"><svg><use href="#folder"/></svg>R:¥</li>
                        <li class="closed"><svg><use href="#box"/></svg>GeoPackage</li>
                        <li><svg><use href="#feather"/></svg>SpatiaLite</li>
                        <li><svg><use href="#elephant"/></svg>PostGIS</li>
                        <li><svg><use href="#mssql"/></svg>MSSQL</li>
                        <li><svg><use href="#db"/></svg>Oracle</li>
                    </ul>
                    <div class="scrollbar"><i class="up"></i><i class="thumb"></i><i class="down"></i></div>
                </div>
            </section>

            <section class="dock layers">
                <div class="dock-title">レイヤー<span><svg><use href="#float"/></svg><svg><use href="#close"/></svg></span></div>
                <div class="dock-tools">
                    <button aria-label="スタイル"><svg><use href="#brush"/></svg></button>
                    <button aria-label="グループ追加"><svg><use href="#group"/></svg></button>
                    <button aria-label="表示管理"><svg><use href="#eye"/></svg></button>
                    <button aria-label="フィルタ"><svg><use href="#funnel"/></svg></button>
                    <button aria-label="式フィルタ"><svg><use href="#epsilon"/></svg></button>
                    <i class="caret"></i>
                    <button aria-label="展開"><svg><use href="#expand"/></svg></button>
                    <button aria-label="折りたたむ"><svg><use href="#collapse"/></svg></button>
                    <button aria-label="削除"><svg><use href="#remove"/></svg></button>
                </div>
                <ul class="tree layer-tree">
                    <li class="current"><label><input type="checkbox" checked><i class="swatch hex"></i><span>Hex_Grid</span></label><svg class="chip"><use href="#chip"/></svg></li>
                    <li class="off"><label><input type="checkbox"><i class="dot pink"></i><span>抽出された（ランダム）</span></label></li>
                    <li class="off"><label><input type="checkbox"><i class="dot amber"></i><span>抽出された（ランダム）</span></label></li>
                    <li class="off"><label><input type="checkbox"><i class="dot brown"></i><span>抽出された（ランダム）</span></label></li>
                    <li class="on"><label><input type="checkbox" checked><svg><use href="#plane"/></svg><span>airports</span></label></li>
                    <li class="off"><label><input type="checkbox"><i class="line"></i><span>majrivers</span></label></li>
                    <li class="off"><label><input type="checkbox"><i class="swatch gold"></i><span>計算された</span></label></li>
                    <li class="off"><label><input type="checkbox"><i class="swatch rust"></i><span>融合</span></label></li>
                    <li class="off"><label><input type="checkbox"><i class="swatch red"></i><span>交差</span></label></li>
                    <li class="off"><label><input type="checkbox"><i class="swatch lime"></i><span>追加された地形の情報</span></label></li>
                    <li class="off"><label><input type="checkbox"><i class="swatch violet"></i><span>バッファ</span></label></li>
                    <li class="off"><label><input type="checkbox"><i class="swatch green"></i><span>trees</span></label></li>
                    <li class="off closed"><label><input type="checkbox"><svg><use href="#count"/></svg><span>カウント</span></label></li>
                    <li class="off"><label><input type="checkbox"><i class="swatch rose"></i><span>固定ジオメトリ</span></label></li>
                    <li class="off closed"><label><input type="checkbox"><svg><use href="#cover"/></svg><span>landcover</span></label></li>
                    <li class="off"><label><input type="checkbox"><i class="swatch slate"></i><span>グリッド</span></label></li>
                    <li class="off"><label><input type="checkbox"><i class="dot brown"></i><span>popp</span></label></li>
                </ul>
            </section>
        </div>

        <div class="map-canvas">
            <svg class="map">
                <use href="#plane" x="47" y="295" width="5" height="5"/>
                <use href="#plane" x="113" y="117" width="10" height="8"/>
                <path id="hexGrid" fill="#8c5a98" stroke="#50335a" stroke-width=".6"/>
                <use href="#plane" x="4" y="288" width="8" height="9"/>
            </svg>
        </div>

        <section class="dock toolbox">
            <div class="dock-title">プロセッシングツールボックス<span><svg><use href="#float"/></svg><svg><use href="#close"/></svg></span></div>
            <div class="dock-tools">
                <button aria-label="モデル"><svg><use href="#model"/></svg></button>
                <button aria-label="スクリプト"><svg><use href="#python"/></svg></button>
                <button aria-label="履歴"><svg><use href="#clock"/></svg></button>
                <button disabled aria-label="結果"><svg><use href="#results"/></svg></button>
                <span class="sep"></span>
                <button aria-label="その場で編集"><svg><use href="#inplace"/></svg></button>
                <span class="sep"></span>
                <button aria-label="オプション"><svg><use href="#wrench"/></svg></button>
            </div>
            <div class="search-box"><svg><use href="#search"/></svg><input type="text" value="create" aria-label="検索"><svg><use href="#clear"/></svg></div>
            <ul class="tree tool-tree">
                <li class="opened"><svg><use href="#clock"/></svg>最近使用された</li>
                <li class="tool"><svg><use href="#model"/></svg>Create_hexagonal_grid</li>
                <li class="opened"><svg><use href="#qgis"/></svg>ベクター作成</li>
                <li class="tool"><svg><use href="#gear"/></svg>オフセット(平行)ラインの配列</li>
                <li class="tool"><svg><use href="#grid"/></svg>グリッドの作成</li>
                <li class="tool"><svg><use href="#gear"/></svg>テーブルからポイントレイヤを作成</li>
                <li class="tool"><svg><use href="#gear"/></svg>ラスタピクセルをポイントに</li>
                <li class="tool"><svg><use href="#gear"/></svg>ラスタピクセルをポリゴンに</li>
                <li class="tool"><svg><use href="#gear"/></svg>移動された地物の配列</li>
                <li class="opened"><svg><use href="#qgis"/></svg>ベクタ一般</li>
                <li class="tool"><svg><use href="#gear"/></svg>空間インデックスの作成</li>
                <li class="tool"><svg><use href="#gear"/></svg>属性インデックスの作成</li>
                <li class="opened"><svg><use href="#qgis"/></svg>ラスタツール</li>
                <li class="tool"><svg><use href="#gear"/></svg>コンスタントラスタレイヤの作成</li>
                <li class="closed"><svg><use href="#tree"/></svg>GRASS</li>
                <li class="opened"><svg><use href="#globe"/></svg>SAGA</li>
                <li class="opened group">Vector general</li>
                <li class="tool deep"><svg><use href="#globe"/></svg>Create lines graticule</li>
                <li class="tool deep"><svg><use href="#globe"/></svg>Create polygons graticule</li>
                <li class="opened group">Vector point tools</li>
                <li class="tool deep"><svg><use href="#globe"/></svg>Create point grid</li>
                <li class="opened short"><svg><use href="#pmodel"/></svg>プロジェクトモデル</li>
                <li class="opened group">Learning QGIS</li>
                <li class="tool deep"><svg><use href="#model"/></svg>Create_hexagonal_grid</li>
                <li class="opened short"><svg><use href="#model"/></svg>モデル</li>
                <li class="opened group">Learning QGIS</li>
                <li class="tool deep selected"><svg><use href="#model"/></svg>Create_hexagonal_grid</li>
            </ul>
            <div class="highlight"></div>
            <p class="note">登録されている</p>
        </section>
    </main>

    <footer class="status-bar">
        <div class="locator"><svg><use href="#search"/></svg><input type="text" placeholder="検索(Ctrl + K)" aria-label="検索"></div>
        <label for="coord">座標</label>
        <input class="field coord" id="coord" type="text" value="1508092,10044721">
        <svg><use href="#extent"/></svg>
        <label for="scale">縮尺</label>
        <span class="field scale"><select id="scale"><option>1:16847938</option></select><i class="caret"></i></span>
        <svg><use href="#lock"/></svg>
        <label for="zoom">拡大</label>
        <span class="spin"><input id="zoom" type="text" value="100%"><i class="steps"></i></span>
        <label for="rotation">回転</label>
        <span class="spin"><input id="rotation" type="text" value="0.0°"><i class="steps"></i></span>
        <label class="render"><input type="checkbox" checked>レンダ</label>
        <a class="crs" href="#"><svg><use href="#crs"/></svg>EPSG:3964</a>
        <button aria-label="メッセージ"><svg><use href="#bubble"/></svg></button>
    </footer>

    <script>
        // Flat-topped hexagons, every second column shifted down by half a cell
        var radius = 5.95;
        var colStep = 8.92;
        var rowStep = 10.25;
        var d = "";
        for (var col = 0; col < 37; col++) {
            for (var row = 0; row < 17; row++) {
                var x = 13.5 + col * colStep;
                var y = 126.8 + row * rowStep + (col % 2) * rowStep / 2;
                var h = rowStep / 2;
                d += "M" + (x - radius) + " " + y +
                    "L" + (x - radius / 2) + " " + (y - h) +
                    "L" + (x + radius / 2) + " " + (y - h) +
                    "L" + (x + radius) + " " + y +
                    "L" + (x + radius / 2) + " " + (y + h) +
                    "L" + (x - radius / 2) + " " + (y + h) + "Z";
            }
        }
        document.getElementById("hexGrid").setAttribute("d", d);
    </script>
</body>
</html>
```
FILE: styles.css
```css
* {
    box-sizing: border-box;
}
body {
    margin: 0;
    height: 100vh;
    display: flex;
    flex-direction: column;
    overflow: hidden;
    background-color: #f0f0f0;
    color: #222;
    font-family: Lato, "Noto Sans CJK JP", sans-serif;
    font-feature-settings: "palt";
    font-size: 6px;
    line-height: 9px;
}
button, input, select {
    font: inherit;
    color: inherit;
    margin: 0;
    padding: 0;
    border: none;
    background: none;
    min-width: 0;
}
a {
    color: inherit;
    text-decoration: none;
}
svg {
    display: block;
    flex: none;
    width: 8px;
    height: 8px;
}
.sprite {
    position: absolute;
    width: 0;
    height: 0;
}

/* Title and menus */
.title-bar {
    display: flex;
    align-items: center;
    height: 12px;
    padding: 0 8px 0 1px;
    gap: 3px;
    background-color: #fff;
}
.window-buttons {
    display: flex;
    gap: 17px;
    margin-left: auto;
}
.window-buttons svg {
    width: 6px;
    height: 6px;
}
.menu-bar {
    display: flex;
    gap: 4px;
    height: 10px;
    padding: 0 5px;
    white-space: nowrap;
}

/* Toolbars */
.toolbar {
    display: flex;
    align-items: center;
    border-bottom: 1px solid #d0d0d0;
    background-color: #f5f5f5;
}
.toolbar-main {
    height: 19px;
    padding: 0 42px 0 6px;
}
.toolbar-data {
    height: 20px;
    padding: 0 2px 0 6px;
}
.toolbar button {
    flex: 0 1 17px;
    height: 17px;
    display: flex;
    align-items: center;
    justify-content: center;
}
.toolbar svg {
    width: 12px;
    height: 12px;
}
.toolbar .active {
    background-color: #dcdcdc;
    border: 1px solid #bbb;
    border-radius: 2px;
}
button:disabled svg {
    filter: grayscale(1);
    opacity: 0.5;
}
.sep {
    flex: none;
    width: 8px;
    height: 12px;
    background: linear-gradient(#d4d4d4, #d4d4d4) center / 1px 100% no-repeat;
}
.caret {
    flex: none;
    width: 7px;
    height: 3px;
    background-color: #555;
    clip-path: polygon(20% 0, 80% 0, 50% 100%);
}
.spin {
    display: flex;
    align-items: center;
    width: 43px;
    height: 11px;
    border: 1px solid #b5b5b5;
    background-color: #fff;
}
.spin input {
    flex: 1;
    width: 0;
    padding-left: 3px;
}
.steps {
    width: 5px;
    height: 6px;
    margin-right: 1px;
    background-color: #555;
    clip-path: polygon(50% 0, 90% 35%, 10% 35%, 50% 0, 50% 100%, 10% 65%, 90% 65%, 50% 100%);
}
.snap {
    flex: none;
    width: 41px;
    background-color: #f3f3f3;
    color: #888;
}
.more {
    flex: none;
    margin-left: auto;
    width: 16px;
    font-size: 10px;
    font-weight: bold;
    text-align: right;
}

/* Docks */
.workspace {
    flex: 1;
    min-height: 0;
    display: flex;
}
.side-bar {
    width: 26px;
    padding: 5px 0 0 4px;
}
.side-bar div {
    display: flex;
    align-items: center;
    height: 16px;
}
.side-bar svg {
    width: 12px;
    height: 12px;
}
.left-docks {
    width: 154px;
    display: flex;
    flex-direction: column;
}
.dock {
    display: flex;
    flex-direction: column;
    border: 1px solid #cfcfcf;
    border-top: none;
}
.layers {
    flex: 1;
    min-height: 0;
}
.dock-title {
    display: flex;
    justify-content: space-between;
    height: 9px;
    padding: 0 2px;
}
.dock-title span {
    display: flex;
    gap: 1px;
    padding-top: 2px;
}
.dock-title svg {
    width: 6px;
    height: 6px;
}
.dock-tools {
    display: flex;
    align-items: center;
    height: 16px;
    padding: 0 3px;
    gap: 5px;
}
.dock-tools .sep {
    margin: 0 -5px;
}
.layers .dock-tools .caret {
    margin: 0 -4px;
}
.browser-box {
    display: flex;
    height: 102px;
    margin-right: 2px;
    border: 1px solid #bbb;
    background-color: #fff;
}
.scrollbar {
    display: flex;
    flex-direction: column;
    width: 7px;
    background-color: #ddd;
}
.up, .down {
    height: 7px;
    background-color: #666;
    clip-path: polygon(50% 30%, 75% 60%, 25% 60%);
}
.down {
    clip-path: polygon(50% 70%, 75% 40%, 25% 40%);
}
.thumb {
    flex: 0 0 42px;
    margin-bottom: auto;
    border: 1px solid #ccc;
    background-color: #f7f7f7;
}

/* Trees */
.tree {
    flex: 1;
    min-height: 0;
    margin: 0;
    padding: 0;
    overflow: hidden;
    list-style: none;
    white-space: nowrap;
    background-color: #fff;
}
.tree li {
    display: flex;
    align-items: center;
    gap: 3px;
    height: 9px;
}
.tree li::before {
    content: "";
    flex: none;
    width: 4px;
    height: 4px;
}
.tree .closed::before {
    background-color: #444;
    clip-path: polygon(20% 0, 80% 50%, 20% 100%);
}
.tree .opened::before {
    background-color: #444;
    clip-path: polygon(0 20%, 100% 20%, 50% 80%);
}
.browser-tree li {
    padding-left: 2px;
}
.browser-tree li::before, .layer-tree li::before {
    margin-right: 2px;
}
.layer-tree {
    margin-right: 2px;
    border: 1px solid #bbb;
}
.layer-tree li {
    padding: 0 2px;
}
.layer-tree label {
    display: flex;
    align-items: center;
    gap: 3px;
}
input[type="checkbox"] {
    appearance: none;
    flex: none;
    width: 7px;
    height: 7px;
    border: 1px solid #bdbdbd;
    background-color: #fff;
}
input[type="checkbox"]:checked::before {
    content: "";
    display: block;
    height: 5px;
    background-color: #111;
    clip-path: polygon(0 45%, 35% 70%, 100% 0, 100% 30%, 35% 100%, 0 75%);
}
.current {
    background-color: #f0f0f0;
}
.current span {
    font-weight: bold;
    text-decoration: underline;
}
.on span {
    font-weight: bold;
}
.off {
    color: #aaa;
    font-style: italic;
}
.chip {
    margin-left: auto;
}
.swatch {
    width: 8px;
    height: 8px;
    border: 1px solid rgba(0, 0, 0, 0.15);
}
.dot {
    width: 4px;
    height: 4px;
    margin: 0 2px;
    border-radius: 50%;
}
.line {
    width: 8px;
    height: 1px;
    background-color: #51a5dc;
}
.hex { background-color: #6264ac; }
.gold { background-color: #cfae38; }
.rust { background-color: #a15a2c; }
.red { background-color: #da1a1a; }
.lime { background-color: #c5d34a; }
.violet { background-color: #9678b6; }
.green { background-color: #97d57c; }
.rose { background-color: #df6c89; }
.slate { background-color: #748788; }
.pink { background-color: #d25a7e; }
.amber { background-color: #d79a28; }
.brown { background-color: #a54a3c; }

/* Map */
.map-canvas {
    flex: 1;
    min-width: 0;
    margin-left: 1px;
    overflow: hidden;
    border-left: 1px solid #cfcfcf;
    background-color: #fff;
}
.map {
    width: 100%;
    height: 100%;
}

/* Processing toolbox */
.toolbox {
    position: relative;
    width: 129px;
    margin-left: 3px;
}
.search-box {
    display: flex;
    align-items: center;
    gap: 4px;
    height: 11px;
    padding: 0 3px;
    border: 1px solid #bbb;
    background-color: #fff;
}
.search-box svg {
    width: 6px;
    height: 6px;
}
.search-box input {
    flex: 1;
    width: 0;
}
.tool-tree {
    border-left: 1px solid #bbb;
}
.tool-tree li {
    padding-left: 3px;
}
.tool-tree .tool {
    padding-left: 14px;
}
.tool-tree .deep {
    padding-left: 24px;
}
.tool-tree .group {
    height: 8px;
    padding-left: 14px;
}
.tool-tree .short {
    height: 8px;
}
.tool-tree .selected {
    background-color: #0078d7;
    color: #fff;
}
.highlight {
    position: absolute;
    top: 256px;
    left: -2px;
    right: 5px;
    height: 25px;
    border: 1px solid #f01010;
}
.note {
    position: absolute;
    top: 295px;
    left: 13px;
    margin: 0;
    color: #f01010;
    font-size: 9px;
    line-height: 12px;
    font-feature-settings: normal;
}

/* Status bar */
.status-bar {
    display: flex;
    align-items: center;
    gap: 3px;
    height: 15px;
    padding: 0 4px 0 2px;
    white-space: nowrap;
}
.locator {
    display: flex;
    align-items: center;
    gap: 4px;
    width: 100px;
    height: 11px;
    margin-right: auto;
    padding: 0 4px;
    border: 1px solid #bbb;
    background-color: #fff;
}
.locator svg {
    width: 6px;
    height: 6px;
}
.locator input {
    flex: 1;
}
.locator input::placeholder {
    color: #777;
}
.field {
    display: flex;
    align-items: center;
    height: 11px;
    padding: 0 1px;
    border: 1px solid #bbb;
    background-color: #fff;
    font-family: "Liberation Sans", sans-serif;
    font-size: 5px;
}
.coord {
    width: 47px;
}
.scale {
    width: 40px;
}
.scale select {
    flex: 1;
    appearance: none;
}
.render {
    display: flex;
    align-items: center;
    gap: 2px;
    margin-left: 1px;
}
.crs {
    display: flex;
    align-items: center;
    gap: 2px;
    margin: 0 3px;
    font-size: 5px;
}
```
